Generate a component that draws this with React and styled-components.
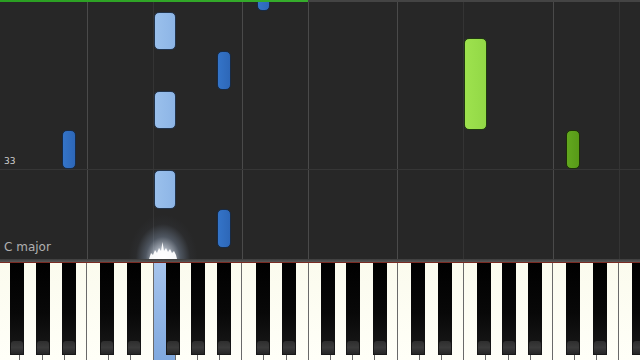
import React from 'react'
import styled, { createGlobalStyle } from 'styled-components'

const GlobalStyle = createGlobalStyle`
  html, body {
    margin: 0;
    padding: 0;
    background: #262626;
    overflow: hidden;
  }
`

const WHITE = 22.2
const START = -1.8
const NAMES = ['F', 'G', 'A', 'B', 'C', 'D', 'E']
const BLACK_OFFSET = { C: -2, D: 2.5, F: -3, G: 0, A: 4 }
const WHITE_COUNT = 30

const edge = i => START + i * WHITE

const Screen = styled.div`
  width: 640px;
  height: 360px;
  display: flex;
  flex-direction: column;
  background: #262626;
  font-family: 'DejaVu Sans', 'Liberation Sans', sans-serif;
`

const Roll = styled.div`
  position: relative;
  height: 259px;
  overflow: hidden;
  background: #272727;
`

const Progress = styled.div`
  position: absolute;
  left: 0;
  top: 0;
  width: 100%;
  height: 2px;
  background: linear-gradient(90deg, #2a9e22 0, #36ad2c 308px, #444 308px);
  z-index: 3;
`

const VLine = styled.div`
  position: absolute;
  top: 0;
  bottom: 0;
  width: 1px;
  background: ${({ strong }) => (strong ? '#4a4a4a' : '#343434')};
`

const HLine = styled.div`
  position: absolute;
  left: 0;
  right: 0;
  height: 1px;
  background: #363636;
`

const Note = styled.div`
  position: absolute;
  box-sizing: border-box;
  border-radius: 5px;
  border: 1px solid ${({ edge }) => edge};
  background: ${({ fill }) => fill};
  z-index: 2;
`

const Label = styled.span`
  position: absolute;
  color: ${({ tone }) => tone};
  font-size: ${({ size }) => size}px;
  z-index: 2;
`

const Glow = styled.div`
  position: absolute;
  left: 128px;
  top: 214px;
  width: 70px;
  height: 60px;
  background: radial-gradient(ellipse at 50% 75%, rgba(255,255,255,0.95) 0, rgba(230,240,255,0.75) 14%, rgba(170,195,230,0.3) 35%, rgba(90,100,120,0.08) 55%, rgba(60,60,60,0) 70%);
  z-index: 2;
`

const Spark = styled.svg`
  position: absolute;
  left: 147px;
  top: 240px;
  z-index: 3;
`

const Rail = styled.div`
  height: 3px;
  background: linear-gradient(#3c3c3c, #585858);
  border-bottom: 1px solid #7a2a22;
`

const Keyboard = styled.div`
  position: relative;
  flex: 1;
  display: flex;
  overflow: hidden;
  background: #fffff6;
`

const WhiteKey = styled.div`
  flex: 0 0 ${WHITE}px;
  box-sizing: border-box;
  border-right: 1px solid #6a6a6a;
  background: ${({ active }) =>
    active ? 'linear-gradient(#a6c4ec, #80a9df)' : 'linear-gradient(#fbfbee, #fffff8)'};
`

const BlackKey = styled.div`
  position: absolute;
  top: 0;
  width: 14px;
  height: 92px;
  box-sizing: border-box;
  padding: 0 1px 1px;
  display: flex;
  align-items: flex-end;
  background: linear-gradient(#000 0, #080808 55%, #1a1a1a 100%);
`

const KeyCap = styled.div`
  flex: 1;
  height: 13px;
  border-radius: 3px 3px 1px 1px;
  background: linear-gradient(#2e2e2e, #3a3a3a 50%, #262626);
`

const notes = [
  { x: 154, y: 12, w: 22, h: 38, kind: 'lightBlue' },
  { x: 154, y: 91, w: 22, h: 38, kind: 'lightBlue' },
  { x: 154, y: 170, w: 22, h: 39, kind: 'lightBlue' },
  { x: 217, y: 51, w: 14, h: 39, kind: 'blue' },
  { x: 217, y: 209, w: 14, h: 39, kind: 'blue' },
  { x: 257, y: -6, w: 13, h: 17, kind: 'blue' },
  { x: 62, y: 130, w: 14, h: 39, kind: 'blue' },
  { x: 464, y: 38, w: 23, h: 92, kind: 'lightGreen' },
  { x: 566, y: 130, w: 14, h: 39, kind: 'green' }
]

const palette = {
  lightBlue: { fill: 'linear-gradient(90deg, #9ac0ec, #8db5e6)', edge: '#22344c' },
  blue: { fill: 'linear-gradient(90deg, #3474c8, #2d67b8)', edge: '#172a44' },
  lightGreen: { fill: 'linear-gradient(90deg, #9ee24e, #92d846)', edge: '#1f3a10' },
  green: { fill: 'linear-gradient(90deg, #62a81e, #589a18)', edge: '#1c3008' }
}

const gridLines = [
  { x: 87, strong: true },
  { x: 153, strong: false },
  { x: 242, strong: true },
  { x: 308, strong: true },
  { x: 397, strong: true },
  { x: 463, strong: false },
  { x: 553, strong: true },
  { x: 619, strong: false }
]

const App = () => {
  const whites = Array.from({ length: WHITE_COUNT }, (_, i) => NAMES[i % 7])
  const blacks = whites
    .map((name, i) => (name in BLACK_OFFSET ? edge(i + 1) + BLACK_OFFSET[name] - 7 : null))
    .filter(v => v !== null)

  return (
    <Screen>
      <GlobalStyle />
      <Roll>
        <Progress />
        {gridLines.map(l => (
          <VLine key={l.x} strong={l.strong} style={{ left: l.x }} />
        ))}
        <HLine style={{ top: 169 }} />
        {notes.map((n, i) => (
          <Note
            key={i}
            fill={palette[n.kind].fill}
            edge={palette[n.kind].edge}
            style={{ left: n.x, top: n.y, width: n.w, height: n.h }}
          />
        ))}
        <Label size={9} tone="#d0d0d0" style={{ left: 4, top: 156 }}>33</Label>
        <Label size={12} tone="#b0b0b0" style={{ left: 4, top: 240 }}>C major</Label>
        <Glow />
        <Spark width="32" height="20" viewBox="0 0 32 20">
          <path
            d="M2 19 L4 13 L6 15 L8 10 L10 13 L12 8 L14 11 L15.5 2 L17 11 L19 8 L21 12 L23 9 L25 13 L27 11 L29 15 L30 19 Z"
            fill="#ffffff"
            opacity="0.95"
          />
        </Spark>
      </Roll>
      <Rail />
      <Keyboard>
        {whites.map((name, i) => (
          <WhiteKey key={i} active={i === 7} style={i === 0 ? { marginLeft: START } : undefined} />
        ))}
        {blacks.map(left => (
          <BlackKey key={left} style={{ left }}>
            <KeyCap />
          </BlackKey>
        ))}
      </Keyboard>
    </Screen>
  )
}

export default App
